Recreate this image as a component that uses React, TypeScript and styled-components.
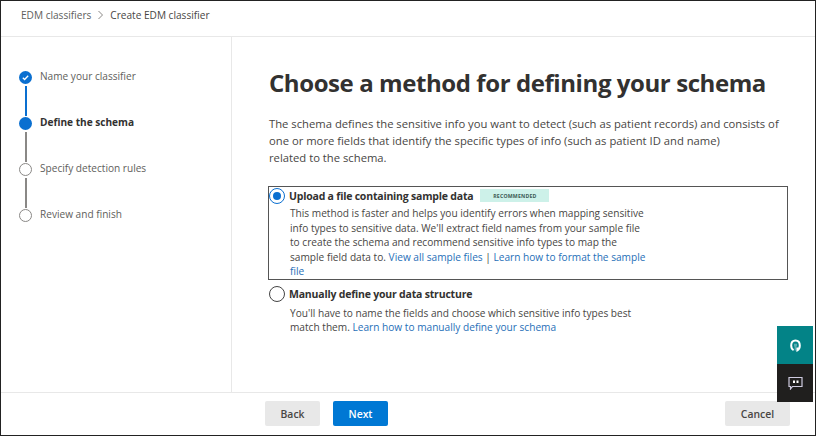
import { createGlobalStyle } from 'styled-components';
import styled from 'styled-components';

const Global = createGlobalStyle`
  html, body {
    margin: 0;
    padding: 0;
    background: #fff;
  }
  body {
    font-family: 'Open Sans', 'Noto Sans', sans-serif;
    color: #323130;
  }
`;

const Frame = styled.div`
  width: 816px;
  height: 436px;
  box-sizing: border-box;
  border: 1px solid #222;
  display: flex;
  flex-direction: column;
  position: relative;
  overflow: hidden;
`;

const Breadcrumb = styled.header`
  height: 36px;
  flex: none;
  box-sizing: border-box;
  border-bottom: 1px solid #e8e8e8;
  display: flex;
  align-items: center;
  gap: 6px;
  padding: 0 0 7px 20px;
  font-size: 10.1px;
  color: #605e5c;
`;

const Crumb = styled.span<{ $current?: boolean }>`
  color: ${({ $current }) => ($current ? '#484644' : '#605e5c')};
`;

const Body = styled.div`
  flex: 1;
  display: flex;
  min-height: 0;
`;

const Sidebar = styled.nav`
  width: 231px;
  flex: none;
  box-sizing: border-box;
  border-right: 1px solid #e8e8e8;
  padding: 34px 0 0 18px;
`;

const Step = styled.div`
  display: flex;
  gap: 8px;
  height: 46px;
`;

const Track = styled.div`
  width: 13px;
  display: flex;
  flex-direction: column;
  align-items: center;
`;

const Dot = styled.span<{ $state: 'done' | 'active' | 'todo' }>`
  width: 13px;
  height: 13px;
  flex: none;
  box-sizing: border-box;
  border-radius: 50%;
  display: flex;
  align-items: center;
  justify-content: center;
  background: ${({ $state }) => ($state === 'todo' ? '#fff' : '#0a6fd0')};
  border: ${({ $state }) => ($state === 'todo' ? '1.5px solid #8a8886' : 'none')};
`;

const Line = styled.span<{ $on?: boolean }>`
  width: 2px;
  flex: 1;
  margin: 2px 0 1px;
  background: ${({ $on }) => ($on ? '#0a6fd0' : '#8a8886')};
`;

const StepLabel = styled.span<{ $active?: boolean }>`
  font-size: 10.1px;
  line-height: 13px;
  margin-top: -1px;
  font-weight: ${({ $active }) => ($active ? 700 : 400)};
  color: ${({ $active }) => ($active ? '#323130' : '#605e5c')};
`;

const Main = styled.main`
  flex: 1;
  padding: 29px 0 0 37px;
`;

const Title = styled.h1`
  margin: 0;
  font-size: 24px;
  line-height: 34px;
  font-weight: 700;
  letter-spacing: -0.42px;
  color: #323130;
`;

const Intro = styled.p`
  margin: 15px 0 0;
  width: 516px;
  font-size: 11.25px;
  line-height: 17px;
  color: #484644;
`;

const Options = styled.div`
  margin-top: 20px;
  width: 519px;
`;

const Option = styled.div<{ $selected?: boolean }>`
  box-sizing: border-box;
  border: 1px solid ${({ $selected }) => ($selected ? '#555' : 'transparent')};
  margin-left: -1px;
`;

const OptionHead = styled.div`
  display: flex;
  align-items: center;
  height: 17px;
  gap: 4px;
`;

const Radio = styled.span<{ $on?: boolean }>`
  width: 16px;
  height: 16px;
  flex: none;
  box-sizing: border-box;
  border-radius: 50%;
  display: flex;
  align-items: center;
  justify-content: center;
  border: 1.5px solid ${({ $on }) => ($on ? '#0a6fd0' : '#444')};
  &::after {
    content: '';
    width: 8px;
    height: 8px;
    border-radius: 50%;
    background: ${({ $on }) => ($on ? '#0a6fd0' : 'transparent')};
  }
`;

const OptionTitle = styled.span`
  font-size: 10.5px;
  font-weight: 700;
  letter-spacing: -0.2px;
  color: #323130;
`;

const Badge = styled.span`
  margin-left: 3px;
  width: 69px;
  height: 13px;
  background: #cdf1e9;
  color: #3b5a54;
  font-size: 5.2px;
  font-weight: 700;
  letter-spacing: 0.2px;
  display: flex;
  align-items: center;
  justify-content: center;
`;

const OptionText = styled.p`
  margin: 2px 0 0 21px;
  width: 358px;
  font-size: 10.14px;
  line-height: 14.5px;
  color: #484644;
`;

const SecondText = styled(OptionText)`
  margin-top: 3px;
`;

const Link = styled.a`
  color: #1f6fb8;
  text-decoration: none;
`;

const SecondOption = styled(Option)`
  margin-top: 5px;
`;

const Footer = styled.footer`
  height: 43px;
  flex: none;
  box-sizing: border-box;
  border-top: 1px solid #e8e8e8;
  display: flex;
  align-items: center;
  padding: 0 25px 1px 264px;
  gap: 13px;
`;

const Button = styled.button<{ $primary?: boolean }>`
  width: 55px;
  height: 25px;
  padding: 0;
  border: none;
  border-radius: 2px;
  font-family: inherit;
  font-size: 10.4px;
  font-weight: 600;
  background: ${({ $primary }) => ($primary ? '#0078d4' : '#e8e8e8')};
  color: ${({ $primary }) => ($primary ? '#fff' : '#484644')};
`;

const CancelButton = styled(Button)`
  width: 65px;
  margin-left: auto;
`;

const FloatPanel = styled.aside`
  position: absolute;
  right: 2px;
  top: 325px;
  width: 36px;
  display: flex;
  flex-direction: column;
`;

const FloatButton = styled.div<{ $bg: string }>`
  height: 38px;
  background: ${({ $bg }) => $bg};
  display: flex;
  align-items: center;
  justify-content: center;
`;

const steps = [
  { label: 'Name your classifier', state: 'done', lineOn: true },
  { label: 'Define the schema', state: 'active', lineOn: false },
  { label: 'Specify detection rules', state: 'todo', lineOn: false },
  { label: 'Review and finish', state: 'todo' },
] as const;

export default function App() {
  return (
    <Frame>
      <Global />
      <Breadcrumb>
        <Crumb>EDM classifiers</Crumb>
        <svg width="7" height="10" viewBox="0 0 7 10" fill="none">
          <path d="M1.5 1l4 4-4 4" stroke="#8a8886" strokeWidth="1" />
        </svg>
        <Crumb $current>Create EDM classifier</Crumb>
      </Breadcrumb>
      <Body>
        <Sidebar>
          {steps.map((step, i) => (
            <Step key={step.label}>
              <Track>
                <Dot $state={step.state}>
                  {step.state === 'done' && (
                    <svg width="9" height="9" viewBox="0 0 9 9" fill="none">
                      <path d="M1.8 4.8l1.8 1.7 3.6-3.7" stroke="#fff" strokeWidth="1.3" />
                    </svg>
                  )}
                </Dot>
                {i < steps.length - 1 && <Line $on={step.state === 'done'} />}
              </Track>
              <StepLabel $active={step.state === 'active'}>{step.label}</StepLabel>
            </Step>
          ))}
        </Sidebar>
        <Main>
          <Title>Choose a method for defining your schema</Title>
          <Intro>
            The schema defines the sensitive info you want to detect (such as patient records) and
            consists of one or more fields that identify the specific types of info (such as patient
            ID and name)
            <br />
            related to the schema.
          </Intro>
          <Options>
            <Option $selected>
              <OptionHead>
                <Radio $on />
                <OptionTitle>Upload a file containing sample data</OptionTitle>
                <Badge>RECOMMENDED</Badge>
              </OptionHead>
              <OptionText>
                This method is faster and helps you identify errors when mapping sensitive info types
                to sensitive data. We'll extract field names from your sample file to create the
                schema and recommend sensitive info types to map the sample field data to.{' '}
                <Link>View all sample files</Link> | <Link>Learn how to format the sample file</Link>
              </OptionText>
            </Option>
            <SecondOption>
              <OptionHead>
                <Radio />
                <OptionTitle>Manually define your data structure</OptionTitle>
              </OptionHead>
              <SecondText>
                You'll have to name the fields and choose which sensitive info types best match them.{' '}
                <Link>Learn how to manually define your schema</Link>
              </SecondText>
            </SecondOption>
          </Options>
        </Main>
      </Body>
      <Footer>
        <Button>Back</Button>
        <Button $primary>Next</Button>
        <CancelButton>Cancel</CancelButton>
      </Footer>
      <FloatPanel>
        <FloatButton $bg="#038387">
          <svg width="11" height="13" viewBox="0 0 11 13" fill="none">
            <path
              d="M3.6 11.2C2 10.4 1.2 8.6 1.2 6.6 1.2 3.4 3 1.4 5.5 1.4s4.3 2 4.3 5.2c0 2.2-.8 4-2.4 4.8V8.4"
              stroke="#fff"
              strokeWidth="2"
            />
            <path d="M4 4.8h3v2.6H6.2v4H4.6V7.4H4z" fill="#fff" opacity="0.35" />
          </svg>
        </FloatButton>
        <FloatButton $bg="#201f1e">
          <svg width="15" height="14" viewBox="0 0 15 14" fill="none">
            <path d="M1 1.5h13v9H4.5L2.5 13v-2.5H1z" stroke="#cfcbe0" strokeWidth="1.2" />
            <rect x="5" y="4.5" width="2" height="2.5" fill="#fff" />
            <rect x="8.5" y="4.5" width="2" height="2.5" fill="#fff" />
          </svg>
        </FloatButton>
      </FloatPanel>
    </Frame>
  );
}
